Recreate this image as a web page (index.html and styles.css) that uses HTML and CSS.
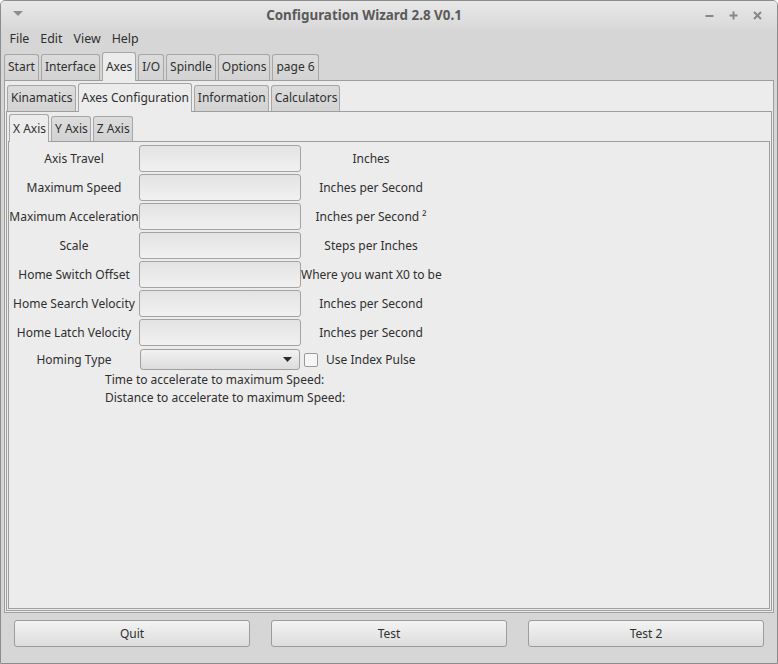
FILE: index.html
```html
<!DOCTYPE html>
<html>
<head>
<meta charset="utf-8">
<title>Configuration Wizard 2.8 V0.1</title>
<link rel="stylesheet" href="styles.css">
</head>
<body>
<div class="window">
  <header class="titlebar">
    <svg class="wm-menu" width="10" height="5" viewBox="0 0 10 5"><path d="M0 0H10L5 5Z" fill="#8e8e8e"/></svg>
    <div class="title">Configuration Wizard 2.8 V0.1</div>
    <div class="wm-buttons">
      <svg width="9" height="9" viewBox="0 0 9 9"><path d="M0.5 5H8.5" stroke="#888" stroke-width="2"/></svg>
      <svg width="9" height="9" viewBox="0 0 9 9"><path d="M0.5 4.5H8.5M4.5 0.5V8.5" stroke="#888" stroke-width="2"/></svg>
      <svg width="9" height="9" viewBox="0 0 9 9"><path d="M1 1L8 8M8 1L1 8" stroke="#888" stroke-width="2"/></svg>
    </div>
  </header>
  <nav class="menubar">
    <span class="menu-item">File</span>
    <span class="menu-item">Edit</span>
    <span class="menu-item">View</span>
    <span class="menu-item">Help</span>
  </nav>
  <div class="tabbar tabbar-top">
    <div class="tab">Start</div>
    <div class="tab">Interface</div>
    <div class="tab sel">Axes</div>
    <div class="tab">I/O</div>
    <div class="tab">Spindle</div>
    <div class="tab">Options</div>
    <div class="tab">page 6</div>
  </div>
  <div class="pane pane-outer">
    <div class="tabbar tabbar-sub">
      <div class="tab">Kinamatics</div>
      <div class="tab sel">Axes Configuration</div>
      <div class="tab">Information</div>
      <div class="tab">Calculators</div>
    </div>
    <div class="pane pane-mid">
      <div class="tabbar tabbar-axis">
        <div class="tab sel">X Axis</div>
        <div class="tab">Y Axis</div>
        <div class="tab">Z Axis</div>
      </div>
      <div class="pane pane-inner">
        <div class="form">
          <div class="label">Axis Travel</div>
          <div class="input"></div>
          <div class="unit">Inches</div>

          <div class="label">Maximum Speed</div>
          <div class="input"></div>
          <div class="unit">Inches per Second</div>

          <div class="label">Maximum Acceleration</div>
          <div class="input"></div>
          <div class="unit">Inches per Second ²</div>

          <div class="label">Scale</div>
          <div class="input"></div>
          <div class="unit">Steps per Inches</div>

          <div class="label">Home Switch Offset</div>
          <div class="input"></div>
          <div class="unit">Where you want X0 to be</div>

          <div class="label">Home Search Velocity</div>
          <div class="input"></div>
          <div class="unit">Inches per Second</div>

          <div class="label">Home Latch Velocity</div>
          <div class="input"></div>
          <div class="unit">Inches per Second</div>

          <div class="label">Homing Type</div>
          <div class="combo">
            <svg width="9" height="5" viewBox="0 0 9 5"><path d="M0 0H9L4.5 5Z" fill="#2a2a2a"/></svg>
          </div>
          <div class="check-cell">
            <span class="checkbox"></span>
            <span class="check-label">Use Index Pulse</span>
          </div>
        </div>
        <div class="info">
          <div>Time to accelerate to maximum Speed:</div>
          <div>Distance to accelerate to maximum Speed:</div>
        </div>
      </div>
    </div>
  </div>
  <div class="buttons">
    <div class="btn">Quit</div>
    <div class="btn">Test</div>
    <div class="btn">Test 2</div>
  </div>
</div>
</body>
</html>
```
FILE: styles.css
```css
html, body {
  margin: 0;
  padding: 0;
  background: #ffffff;
}

body {
  font-family: "Noto Sans", "DejaVu Sans", sans-serif;
  font-size: 12px;
  color: #2f2f2f;
}

.window {
  width: 778px;
  height: 664px;
  box-sizing: border-box;
  border: 1px solid #8c8c8c;
  border-radius: 5px 5px 0 0;
  background: #d6d6d6;
  display: flex;
  flex-direction: column;
  overflow: hidden;
}

/* Title bar */
.titlebar {
  height: 29px;
  flex: none;
  display: flex;
  align-items: center;
  background: linear-gradient(#e8e8e8, #d8d8d8);
  padding-left: 12px;
}

.wm-menu {
  margin-top: -4px;
}

.title {
  flex: 1;
  text-align: center;
  font-weight: bold;
  color: #5a5a5a;
  font-size: 13.4px;
  margin-top: -1px;
}

.wm-buttons {
  display: flex;
  gap: 15px;
  padding-right: 15px;
  margin-top: -1px;
}

/* Menu bar */
.menubar {
  height: 17px;
  flex: none;
  display: flex;
  align-items: center;
  padding-left: 3px;
}

.menu-item {
  padding: 0 5.5px;
  font-size: 12.4px;
}

/* Tabs */
.tabbar {
  display: flex;
  flex: none;
  align-items: flex-end;
  height: 28px;
  padding-left: 1px;
}

.tabbar-top {
  margin-top: 5px;
  padding-left: 3px;
}

.tab {
  position: relative;
  height: 26px;
  box-sizing: border-box;
  border: 1px solid #a6a6a6;
  border-bottom: none;
  border-radius: 3px 3px 0 0;
  background: linear-gradient(#dcdcdc, #d3d3d3);
  padding: 0 3px 5px;
  margin-right: 2px;
  display: flex;
  align-items: flex-end;
  line-height: 17px;
  white-space: nowrap;
}

.tab.sel {
  height: 29px;
  margin-bottom: -1px;
  padding-bottom: 6px;
  background: #ececec;
  z-index: 1;
}

.tabbar-sub .tab {
  padding-left: 3px;
  padding-right: 2px;
}

.tabbar-axis {
  height: 27px;
}

.tabbar-axis .tab {
  height: 25px;
  padding-bottom: 4px;
  padding-right: 2px;
}

.tabbar-axis .tab.sel {
  height: 28px;
  padding-bottom: 5px;
}

/* Panes */
.pane {
  border: 1px solid #9e9e9e;
  background: #ececec;
  display: flex;
  flex-direction: column;
}

.pane-outer {
  flex: 1;
  margin: 0 3px;
  padding: 2px 1px 1px;
}

.pane-mid {
  flex: 1;
  padding: 2px 1px 1px;
}

.pane-inner {
  flex: 1;
  padding-top: 3px;
}

/* Form */
.form {
  display: grid;
  grid-template-columns: 130px 162px 140px;
  row-gap: 2px;
  align-items: center;
}

.label, .unit {
  text-align: center;
  white-space: nowrap;
}

.input {
  height: 27px;
  box-sizing: border-box;
  border: 1px solid #a3a3a3;
  border-radius: 3px;
  background: linear-gradient(#e3e3e3, #f1f1f1);
}

.combo {
  height: 21px;
  width: 160px;
  box-sizing: border-box;
  margin: 1px 0 1px 1px;
  border: 1px solid #a0a0a0;
  border-radius: 3px;
  background: linear-gradient(#f2f2f2, #dcdcdc);
  display: flex;
  align-items: center;
  justify-content: flex-end;
  padding-right: 7px;
}

.check-cell {
  display: flex;
  align-items: center;
  padding-left: 3px;
}

.checkbox {
  width: 14px;
  height: 14px;
  box-sizing: border-box;
  border: 1px solid #9a9a9a;
  border-radius: 2px;
  background: #f6f6f6;
}

.check-label {
  margin-left: 8px;
}

.info {
  margin-top: 0;
  padding-left: 96px;
  line-height: 18px;
}

/* Bottom buttons */
.buttons {
  display: flex;
  flex: none;
  gap: 21px;
  padding: 0 13px;
  margin: 7px 0 16px;
}

.btn {
  flex: 1;
  height: 27px;
  box-sizing: border-box;
  border: 1px solid #9c9c9c;
  border-radius: 3px;
  background: linear-gradient(#f3f3f3, #dddddd);
  display: flex;
  align-items: center;
  justify-content: center;
}
```
